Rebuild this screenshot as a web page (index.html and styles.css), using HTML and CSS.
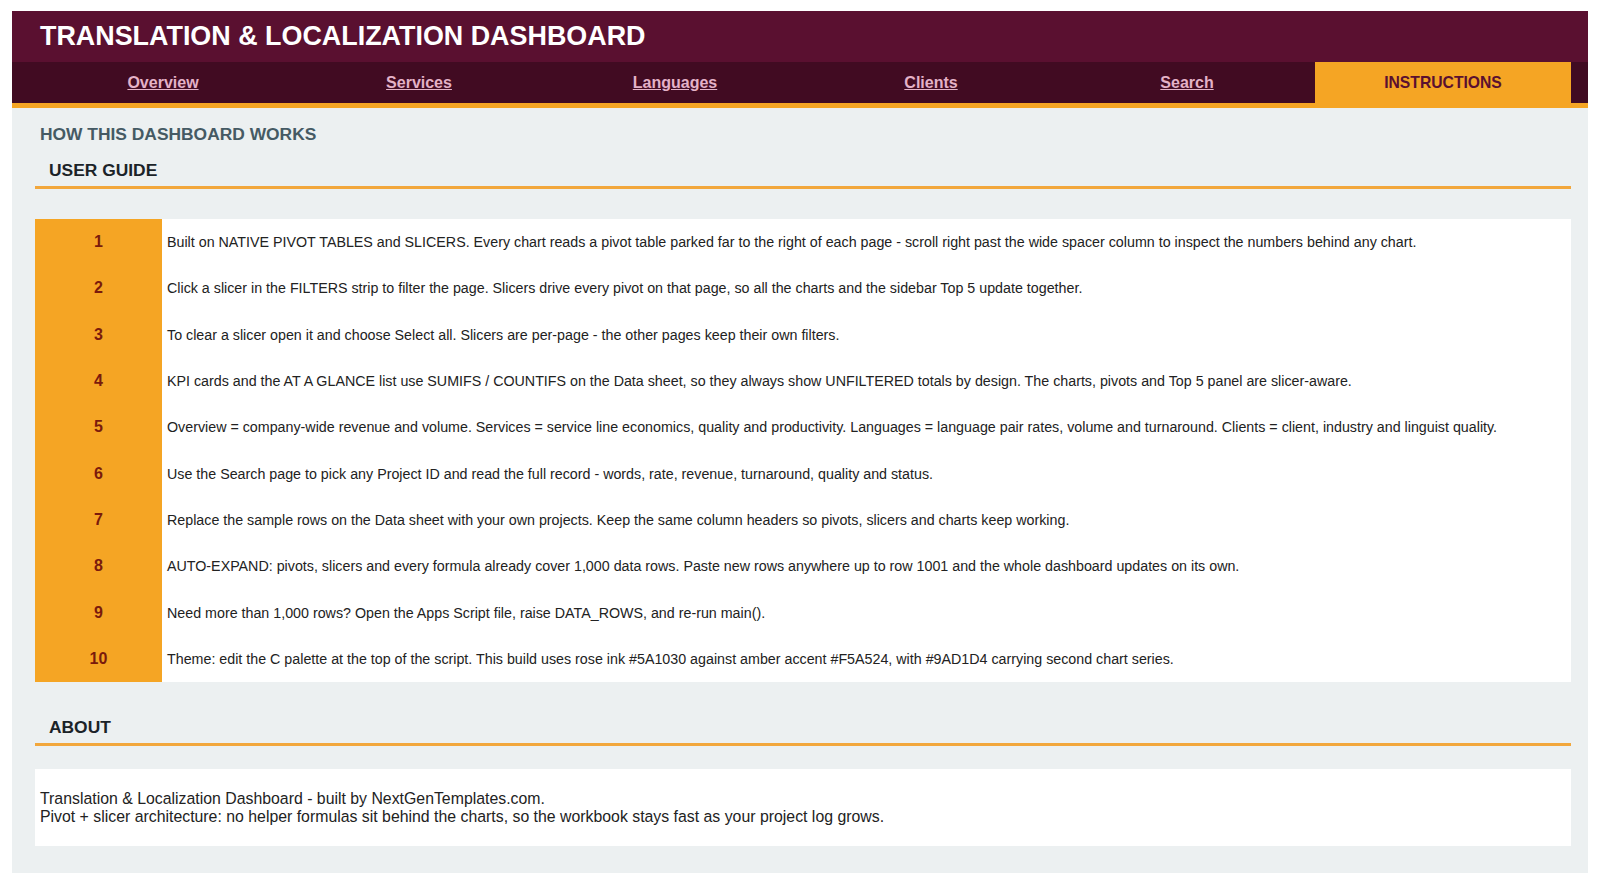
FILE: index.html
```html
<!DOCTYPE html>
<html>
<head>
    <meta charset="UTF-8">
    <link rel="stylesheet" href="styles.css">
</head>
<body>
    <div class="sheet">
        <div class="title-bar">TRANSLATION &amp; LOCALIZATION DASHBOARD</div>

        <nav class="tabs">
            <a href="#" class="tab">Overview</a>
            <a href="#" class="tab">Services</a>
            <a href="#" class="tab">Languages</a>
            <a href="#" class="tab">Clients</a>
            <a href="#" class="tab">Search</a>
            <span class="tab active">INSTRUCTIONS</span>
        </nav>

        <div class="content">
            <div class="page-title">HOW THIS DASHBOARD WORKS</div>

            <div class="section-head">USER GUIDE</div>
            <div class="guide">
                <div class="num">1</div>
                <div class="step">Built on NATIVE PIVOT TABLES and SLICERS. Every chart reads a pivot table parked far to the right of each page - scroll right past the wide spacer column to inspect the numbers behind any chart.</div>
                <div class="num">2</div>
                <div class="step">Click a slicer in the FILTERS strip to filter the page. Slicers drive every pivot on that page, so all the charts and the sidebar Top 5 update together.</div>
                <div class="num">3</div>
                <div class="step">To clear a slicer open it and choose Select all. Slicers are per-page - the other pages keep their own filters.</div>
                <div class="num">4</div>
                <div class="step">KPI cards and the AT A GLANCE list use SUMIFS / COUNTIFS on the Data sheet, so they always show UNFILTERED totals by design. The charts, pivots and Top 5 panel are slicer-aware.</div>
                <div class="num">5</div>
                <div class="step">Overview = company-wide revenue and volume. Services = service line economics, quality and productivity. Languages = language pair rates, volume and turnaround. Clients = client, industry and linguist quality.</div>
                <div class="num">6</div>
                <div class="step">Use the Search page to pick any Project ID and read the full record - words, rate, revenue, turnaround, quality and status.</div>
                <div class="num">7</div>
                <div class="step">Replace the sample rows on the Data sheet with your own projects. Keep the same column headers so pivots, slicers and charts keep working.</div>
                <div class="num">8</div>
                <div class="step">AUTO-EXPAND: pivots, slicers and every formula already cover 1,000 data rows. Paste new rows anywhere up to row 1001 and the whole dashboard updates on its own.</div>
                <div class="num">9</div>
                <div class="step">Need more than 1,000 rows? Open the Apps Script file, raise DATA_ROWS, and re-run main().</div>
                <div class="num">10</div>
                <div class="step">Theme: edit the C palette at the top of the script. This build uses rose ink #5A1030 against amber accent #F5A524, with #9AD1D4 carrying second chart series.</div>
            </div>

            <div class="section-head about-head">ABOUT</div>
            <div class="about">
                Translation &amp; Localization Dashboard - built by NextGenTemplates.com.<br>
                Pivot + slicer architecture: no helper formulas sit behind the charts, so the workbook stays fast as your project log grows.
            </div>
        </div>
    </div>
</body>
</html>
```

FILE: styles.css
```css
body { margin: 0; background: #fff; font-family: "Liberation Sans", Arial, sans-serif; }

.sheet { margin: 11px 12px 12px 12px; }

/* header + tab strip */
.title-bar { height: 51px; background: #5a1030; color: #fff; font-size: 26.9px; font-weight: bold; line-height: 51px; padding-left: 28px; }
.tabs { display: grid; grid-template-columns: repeat(6, 256px); height: 41px; padding-left: 23px; background: #410b22; border-bottom: 5px solid #f5a524; }
.tab { display: flex; align-items: center; justify-content: center; color: #e4b2c7; font-size: 16px; font-weight: bold; text-decoration: underline; }
.tab.active { background: #f5a524; color: #5a1030; text-decoration: none; font-size: 15.7px; }

/* page body */
.content { background: #ecf0f1; padding: 16px 17px 27px 23px; }
.page-title { font-size: 17.4px; font-weight: bold; color: #455a64; line-height: 20px; padding-left: 5px; }
.section-head { margin-top: 16px; padding: 0 0 6px 14px; font-size: 17.4px; font-weight: bold; color: #1b2328; line-height: 20px; border-bottom: 3px solid #f2a73c; }

.guide { display: grid; grid-template-columns: 127px 1fr; grid-auto-rows: 46.3px; margin-top: 30px; background: #fff; }
.num { background: #f5a524; color: #7a1a0c; font-size: 16px; font-weight: bold; display: flex; align-items: center; justify-content: center; }
.step { display: flex; align-items: center; padding-left: 5px; font-size: 14.27px; color: #222; }

.about-head { margin-top: 35px; }
.about { margin-top: 23px; background: #fff; padding: 21px 5px 20px 5px; font-size: 15.85px; line-height: 18px; color: #222; }
```
